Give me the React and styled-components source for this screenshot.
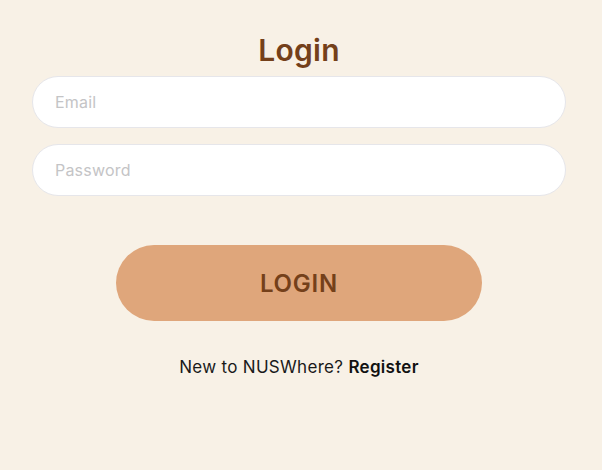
import React from "react";
import styled, { createGlobalStyle } from "styled-components";

const Global = createGlobalStyle`
  html, body { margin: 0; padding: 0; background: #f8f1e6; }
  body { font-family: Inter, "Noto Sans", sans-serif; }
  * { box-sizing: border-box; }
`;

const Page = styled.div`
  min-height: 470px;
  background: #f8f1e6;
  padding: 30px 36px 0 32px;
  display: flex;
  flex-direction: column;
  align-items: stretch;
`;

const Title = styled.h1`
  margin: 0;
  text-align: center;
  font-size: 30px;
  font-weight: 600;
  color: #74401a;
  line-height: 40px;
  margin-bottom: 6px;
  letter-spacing: 0.3px;
`;

const Field = styled.input`
  display: block;
  width: 100%;
  height: 52px;
  border: 1px solid #e6e6ea;
  border-radius: 26px;
  background: #fff;
  padding: 0 22px;
  font-family: Inter, "Noto Sans", sans-serif;
  font-size: 16px;
  letter-spacing: 0.2px;
  color: #333;
  outline: none;
  margin-bottom: 16px;
  &::placeholder { color: #c4c4c6; }
`;

const LoginButton = styled.button`
  align-self: center;
  width: 366px;
  height: 76px;
  margin-top: 33px;
  border: none;
  border-radius: 38px;
  background: #dfa67b;
  color: #74401a;
  font-family: Inter, "Noto Sans", sans-serif;
  font-size: 24px;
  font-weight: 600;
  letter-spacing: 0.8px;
  cursor: pointer;
`;

const Footer = styled.p`
  margin: 36px 0 0;
  text-align: center;
  font-size: 17px;
  letter-spacing: 0.3px;
  color: #1a1a1a;
  line-height: 20px;
`;

const Link = styled.span`
  font-weight: 600;
  color: #111;
`;

export default function App() {
  return (
    <>
      <Global />
      <Page>
        <Title>Login</Title>
        <Field placeholder="Email" />
        <Field placeholder="Password" type="password" />
        <LoginButton>LOGIN</LoginButton>
        <Footer>
          New to NUSWhere? <Link>Register</Link>
        </Footer>
      </Page>
    </>
  );
}
